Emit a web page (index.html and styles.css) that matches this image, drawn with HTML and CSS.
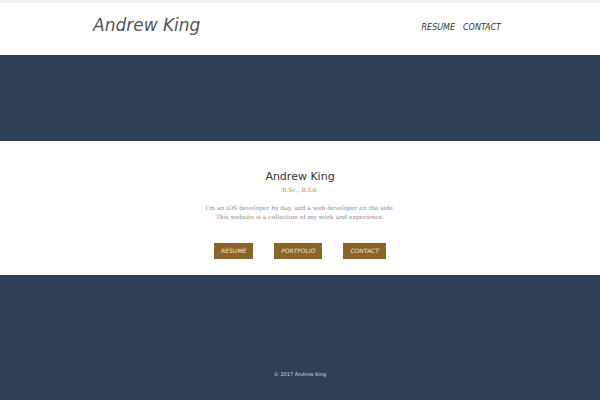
FILE: index.html
```html
<!DOCTYPE html>
<html lang="en">
<head>
<meta charset="utf-8">
<title>Andrew King</title>
<link rel="stylesheet" href="styles.css">
</head>
<body>
<header class="site-header">
  <div class="header-inner">
    <a class="brand" href="#">Andrew King</a>
    <nav class="nav">
      <a href="#">RESUME</a>
      <a href="#">CONTACT</a>
    </nav>
  </div>
</header>
<div class="banner"></div>
<main class="intro">
  <h1>Andrew King</h1>
  <p class="degrees">B.Sc., B.Ed.</p>
  <p class="about">I'm an iOS developer by day, and a web developer on the side.<br>This website is a collection of my work and experience.</p>
  <div class="actions">
    <a class="action" href="#">RÉSUMÉ</a>
    <a class="action" href="#">PORTFOLIO</a>
    <a class="action" href="#">CONTACT</a>
  </div>
</main>
<footer class="site-footer">© 2017 Andrew King</footer>
</body>
</html>
```
FILE: styles.css
```css
* {
  box-sizing: border-box;
}

body {
  display: flex;
  flex-direction: column;
  min-height: 100vh;
  margin: 0;
  background: #2f3f57;
  font-family: "DejaVu Sans", sans-serif;
}

h1,
p {
  margin: 0;
  font-weight: 400;
}

a {
  color: inherit;
  text-decoration: none;
}

.site-header {
  border-top: 3px solid #eeeeee;
  background: #ffffff;
}

.header-inner {
  display: flex;
  justify-content: space-between;
  width: 69%;
  margin: 0 auto;
  padding: 10px 6px 18px 0;
  font-style: oblique;
}

.brand {
  color: #555555;
  font-size: 17px;
  line-height: 24px;
}

.nav {
  display: flex;
  gap: 8px;
  padding-top: 9px;
  color: #333333;
  font-size: 8px;
  line-height: 12px;
}

.banner {
  height: 86px;
}

.intro {
  padding: 28px 16px 16px;
  background: #ffffff;
  text-align: center;
}

.intro h1 {
  color: #333333;
  font-size: 11px;
  line-height: 16px;
}

.degrees,
.about {
  color: #8c8c8c;
  font-family: "DejaVu Serif", serif;
  font-size: 6px;
  line-height: 9px;
}

.about {
  margin-top: 9px;
}

.actions {
  display: flex;
  justify-content: center;
  gap: 21px;
  margin-top: 22px;
}

.action {
  padding: 2px 7px;
  background: #8a6429;
  color: #f4ead8;
  font-size: 6px;
  font-style: oblique;
  line-height: 12px;
}

.site-footer {
  margin-top: auto;
  padding: 20px 0;
  color: #d5dae2;
  font-size: 5px;
  line-height: 12px;
  text-align: center;
}
```
